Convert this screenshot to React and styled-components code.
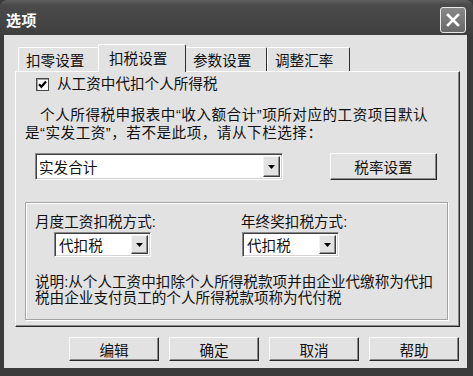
import React from "react";
import styled, { createGlobalStyle } from "styled-components";

const GlobalStyle = createGlobalStyle`
  body {
    margin: 0;
    background: #3b3b3b;
  }
  * {
    box-sizing: border-box;
  }
`;

const font = `"Liberation Sans", "Noto Sans CJK SC", sans-serif`;

const Window = styled.div`
  width: 473px;
  height: 376px;
  display: flex;
  flex-direction: column;
  background: #3b3b3b;
  border-radius: 7px 7px 0 0;
  font-family: ${font};
  font-size: 14.6px;
  color: #111;
`;

const TitleBar = styled.div`
  height: 35px;
  flex: none;
  display: flex;
  align-items: center;
  justify-content: space-between;
  padding: 4px 7px 0 6px;
  background: linear-gradient(#606060, #4a4a4a 14%, #454545 60%, #3e3e3e);
  border-radius: 7px 7px 0 0;
`;

const Title = styled.div`
  color: #fff;
  font-weight: bold;
  font-size: 15px;
  letter-spacing: 0.5px;
`;

const CloseButton = styled.div`
  width: 26px;
  height: 26px;
  display: flex;
  align-items: center;
  justify-content: center;
  border: 1px solid #e8e8e8;
  border-radius: 3px;
  background: linear-gradient(#888, #6a6a6a);
`;

const Body = styled.div`
  flex: 1;
  margin: 0 6px 8px 4px;
  background: #e2e2e2;
  padding: 9px 0 0 11px;
  display: flex;
  flex-direction: column;
`;

const TabStrip = styled.div`
  height: 27px;
  display: flex;
  align-items: flex-end;
  padding-left: 3px;
`;

const Tab = styled.div`
  width: ${p => p.$w}px;
  height: ${p => (p.$active ? 28 : 24)}px;
  margin: ${p => (p.$active ? "0 -1px -1px -2px" : "0")};
  padding-left: ${p => (p.$active ? 10 : 7)}px;
  padding-bottom: ${p => (p.$active ? 3 : 1)}px;
  display: flex;
  align-items: center;
  background: #e2e2e2;
  border-top: 1px solid #fff;
  border-left: 1px solid #fff;
  border-right: 1px solid #2e2e2e;
  border-radius: 2px 2px 0 0;
  white-space: nowrap;
  position: relative;
  z-index: ${p => (p.$active ? 1 : 0)};
`;

const Panel = styled.div`
  width: 445px;
  height: 256px;
  border-top: 1px solid #fff;
  border-left: 1px solid #fff;
  border-right: 1px solid #262626;
  border-bottom: 1px solid #262626;
  box-shadow: inset -1px -1px 0 #8c8c8c;
  padding: 5px 11px 6px 9px;
  display: flex;
  flex-direction: column;
`;

const CheckRow = styled.label`
  display: flex;
  align-items: center;
  gap: 8px;
  height: 14px;
  margin-left: 11px;
  line-height: 14px;
  white-space: nowrap;
`;

const CheckBox = styled.span`
  width: 13px;
  height: 13px;
  display: flex;
  align-items: center;
  justify-content: center;
  background: #fff;
  border: 1px solid #4a4a4a;
  box-shadow: inset 1px 1px 0 #a0a0a0;
`;

const Paragraph = styled.div`
  margin-top: 15px;
  line-height: 18px;
  letter-spacing: 0.5px;
  white-space: nowrap;
`;

const ComboRow = styled.div`
  margin-top: 11px;
  display: flex;
  align-items: flex-start;
`;

const Combo = styled.div`
  width: ${p => p.$w}px;
  height: ${p => p.$h}px;
  margin-left: ${p => p.$ml || 0}px;
  margin-top: ${p => p.$mt || 0}px;
  display: flex;
  align-items: stretch;
  background: #fff;
  border: 1px solid;
  border-color: #888 #fff #fff #888;
  box-shadow: inset 1px 1px 0 #404040, inset -1px -1px 0 #d4d4d4;
  padding: 2px;
`;

const ComboText = styled.span`
  flex: 1;
  display: flex;
  align-items: center;
  padding-left: ${p => p.$pl || 1}px;
  white-space: nowrap;
`;

const DropButton = styled.span`
  width: 17px;
  display: flex;
  align-items: center;
  justify-content: center;
  background: #e2e2e2;
  border: 1px solid;
  border-color: #f4f4f4 #3a3a3a #3a3a3a #f4f4f4;
  box-shadow: inset -1px -1px 0 #8c8c8c;
`;

const Button = styled.div`
  width: ${p => p.$w || 90}px;
  height: ${p => p.$h || 24}px;
  display: flex;
  align-items: center;
  justify-content: center;
  background: #e2e2e2;
  border: 1px solid;
  border-color: #fbfbfb #262626 #262626 #fbfbfb;
  box-shadow: inset -1px -1px 0 #8c8c8c;
  white-space: nowrap;
`;

const TaxButton = styled(Button)`
  margin-left: auto;
  margin-right: 11px;
`;

const Group = styled.div`
  flex: 1;
  margin-top: 22px;
  border: 1px solid #a2a2a2;
  box-shadow: inset 1px 1px 0 #fff, 1px 1px 0 #fff;
  padding: 10px 9px;
`;

const GroupGrid = styled.div`
  display: grid;
  grid-template-columns: 206px 1fr;
`;

const Field = styled.div`
  display: flex;
  flex-direction: column;
  align-items: flex-start;
`;

const FieldLabel = styled.div`
  line-height: 18px;
  white-space: nowrap;
`;

const Note = styled.div`
  margin-top: 17px;
  line-height: 16px;
  white-space: nowrap;
`;

const Footer = styled.div`
  margin-top: 10px;
  display: flex;
  justify-content: flex-end;
  gap: 10px;
  padding-right: 8px;
`;

const Arrow = () => (
  <svg width="7" height="4" viewBox="0 0 7 4">
    <polygon points="0,0 7,0 3.5,4" fill="#000" />
  </svg>
);

const Select = ({ w, h, ml, mt, pl, children }) => (
  <Combo $w={w} $h={h} $ml={ml} $mt={mt}>
    <ComboText $pl={pl}>{children}</ComboText>
    <DropButton>
      <Arrow />
    </DropButton>
  </Combo>
);

export default function App() {
  return (
    <>
      <GlobalStyle />
      <Window>
        <TitleBar>
          <Title>选项</Title>
          <CloseButton>
            <svg width="14" height="14" viewBox="0 0 14 14">
              <path
                d="M2 2 L12 12 M12 2 L2 12"
                stroke="#fff"
                strokeWidth="2.6"
                strokeLinecap="square"
              />
            </svg>
          </CloseButton>
        </TitleBar>
        <Body>
          <TabStrip>
            <Tab $w={82}>扣零设置</Tab>
            <Tab $w={88} $active>
              扣税设置
            </Tab>
            <Tab $w={82}>参数设置</Tab>
            <Tab $w={83}>调整汇率</Tab>
          </TabStrip>
          <Panel>
            <CheckRow>
              <CheckBox>
                <svg width="9" height="9" viewBox="0 0 9 9">
                  <path
                    d="M1 4.2 L3.4 6.8 L8 1.6"
                    stroke="#000"
                    strokeWidth="2.2"
                    fill="none"
                  />
                </svg>
              </CheckBox>
              从工资中代扣个人所得税
            </CheckRow>
            <Paragraph>
              {"\u3000个人所得税申报表中\u201C收入额合计\u201D项所对应的工资项目默认"}
              <br />
              {"是\u201C实发工资\u201D，若不是此项，请从下栏选择："}
            </Paragraph>
            <ComboRow>
              <Select w={248} h={27} ml={10} pl={1}>
                实发合计
              </Select>
              <TaxButton $w={107} $h={27}>
                税率设置
              </TaxButton>
            </ComboRow>
            <Group>
              <GroupGrid>
                <Field>
                  <FieldLabel>月度工资扣税方式:</FieldLabel>
                  <Select w={97} h={25} ml={19} mt={1} pl={2}>
                    代扣税
                  </Select>
                </Field>
                <Field>
                  <FieldLabel>年终奖扣税方式:</FieldLabel>
                  <Select w={97} h={25} ml={1} mt={1} pl={2}>
                    代扣税
                  </Select>
                </Field>
              </GroupGrid>
              <Note>
                说明:从个人工资中扣除个人所得税款项并由企业代缴称为代扣
                <br />
                税由企业支付员工的个人所得税款项称为代付税
              </Note>
            </Group>
          </Panel>
          <Footer>
            <Button>编辑</Button>
            <Button>确定</Button>
            <Button>取消</Button>
            <Button>帮助</Button>
          </Footer>
        </Body>
      </Window>
    </>
  );
}
